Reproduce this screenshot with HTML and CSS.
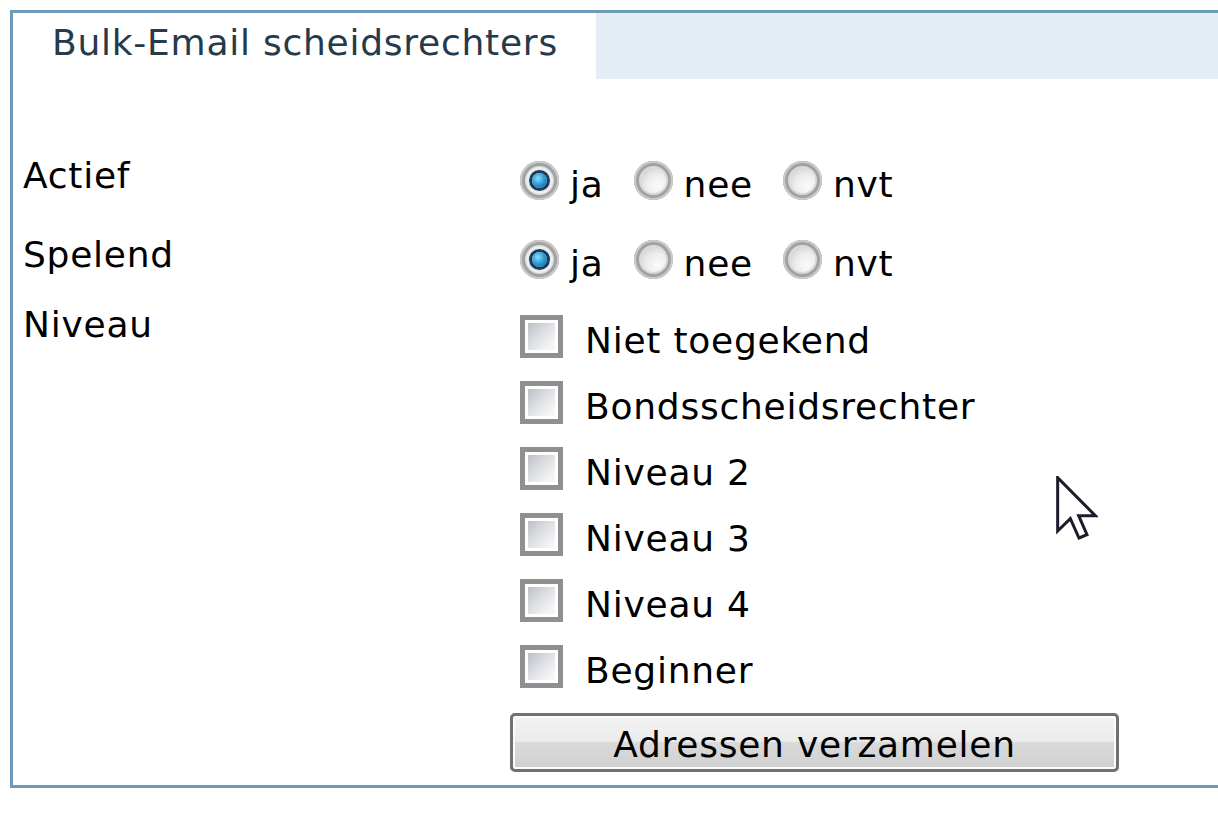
FILE: index.html
```html
<!DOCTYPE html>
<html lang="nl">
<head>
  <meta charset="UTF-8" />
  <title>Bulk-Email scheidsrechters</title>
  <link rel="stylesheet" href="styles.css">
</head>
<body>
  <div class="panel">
    <div class="tabs">
      <div class="tab">Bulk-Email scheidsrechters</div>
      <div class="tab-fill"></div>
    </div>

    <form class="form">
      <div class="row">
        <div class="label">Actief</div>
        <div class="options">
          <span class="option"><span class="radio checked"></span><span class="text">ja</span></span>
          <span class="option"><span class="radio"></span><span class="text">nee</span></span>
          <span class="option"><span class="radio"></span><span class="text">nvt</span></span>
        </div>
      </div>

      <div class="row">
        <div class="label">Spelend</div>
        <div class="options">
          <span class="option"><span class="radio checked"></span><span class="text">ja</span></span>
          <span class="option"><span class="radio"></span><span class="text">nee</span></span>
          <span class="option"><span class="radio"></span><span class="text">nvt</span></span>
        </div>
      </div>

      <div class="row row-list">
        <div class="label">Niveau</div>
        <div class="checks">
          <div class="check"><span class="box"></span><span class="text">Niet toegekend</span></div>
          <div class="check"><span class="box"></span><span class="text">Bondsscheidsrechter</span></div>
          <div class="check"><span class="box"></span><span class="text">Niveau 2</span></div>
          <div class="check"><span class="box"></span><span class="text">Niveau 3</span></div>
          <div class="check"><span class="box"></span><span class="text">Niveau 4</span></div>
          <div class="check"><span class="box"></span><span class="text">Beginner</span></div>
          <button type="button" class="button">Adressen verzamelen</button>
        </div>
      </div>
    </form>

    <svg class="cursor" width="42" height="64" viewBox="0 0 12.6 19.2">
      <path d="M0.5 0.5 V16.5 L4.3 12.8 L6.9 18.6 L9.3 17.6 L6.8 11.9 H11.8 Z" fill="#ffffff" stroke="#1c1c2c" stroke-width="0.9" stroke-linejoin="miter"/>
    </svg>
  </div>
</body>
</html>
```

FILE: styles.css
```css
html, body {
  overflow: hidden;
}
body {
  margin: 0;
  font-family: "DejaVu Sans", Verdana, sans-serif;
  font-size: 36px;
  line-height: 40px;
  letter-spacing: 0.75px;
  color: #000;
  background: #fff;
}
.panel {
  position: relative;
  width: 1300px;
  margin: 10px 0 0 10px;
  border: 3px solid #6e9ab8;
  border-right: none;
}
.tabs {
  display: flex;
  height: 66px;
}
.tab {
  width: 544px;
  padding: 10px 0 0 39px;
  color: #253a4a;
  background: #fff;
}
.tab-fill {
  flex: 1;
  background: #e4ecf6;
}
.form {
  padding: 62px 0 13px 0;
}
.row {
  display: grid;
  grid-template-columns: 507px 1fr;
  height: 79px;
}
.label {
  padding: 15px 0 0 10px;
}
.row-list {
  height: auto;
}
.row-list .label {
  padding-top: 6px;
}
.options {
  display: flex;
  align-items: center;
}
.option {
  display: flex;
  align-items: center;
  margin-right: 30px;
}
.text {
  padding-top: 9px;
}
.radio {
  position: relative;
  width: 39px;
  height: 39px;
  margin-right: 11px;
  border-radius: 50%;
  background: radial-gradient(circle at 62% 65%, #fbfbfb 0, #ececec 35%, #d2d2d2 60%);
  box-shadow: inset 0 0 0 2px #cbcbcb, inset 0 0 0 5px #a2a2a2, inset 0 0 0 7px #dadada;
}
.radio.checked::after {
  content: "";
  position: absolute;
  left: 12px;
  top: 12px;
  width: 15px;
  height: 15px;
  border-radius: 50%;
  background: radial-gradient(circle at 40% 35%, #8fdcf8 0, #2f9fdc 45%, #11629e 90%);
  box-shadow: 0 0 0 3px #1d3a57, 0 0 0 6px #e8eef2;
}
.checks {
  padding-top: 4px;
}
.check {
  display: flex;
  align-items: center;
  height: 66px;
}
.box {
  width: 27px;
  height: 27px;
  margin-right: 22px;
  padding: 3px;
  border: 5px solid #8f8f8f;
  background: linear-gradient(135deg, #b3b7c0 0, #dcdee2 45%, #f6f6f6 80%);
  background-clip: content-box;
  background-color: #f3f3f3;
}
.button {
  display: block;
  width: 609px;
  height: 59px;
  margin: 14px 0 0 -10px;
  padding: 4px 0 0 0;
  font: inherit;
  letter-spacing: 0.75px;
  color: #000;
  border: 3px solid #717171;
  border-radius: 5px;
  background: linear-gradient(#f3f3f3 0, #ebebeb 48%, #dadada 50%, #d0d0d0 100%);
  box-shadow: inset 0 0 0 2px #fbfbfb;
}
.cursor {
  position: absolute;
  left: 1043px;
  top: 463px;
}
```
